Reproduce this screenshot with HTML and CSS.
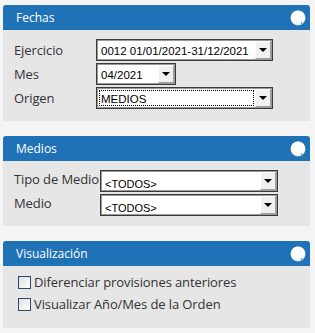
FILE: index.html
```html
<!DOCTYPE html>
<html lang="es">
<head>
  <meta charset="UTF-8" />
  <meta name="viewport" content="width=device-width, initial-scale=1.0" />
  <title>Filtros</title>
  <link rel="stylesheet" href="styles.css">
</head>
<body>
  <div class="panel">
    <div class="panel-head">
      <span>Fechas</span>
      <svg class="knob" width="16" height="16" viewBox="0 0 16 16">
        <circle cx="8" cy="8" r="7.5" fill="#c9d6e3"/>
        <circle cx="8" cy="7.6" r="7.1" fill="#fff"/>
        <circle cx="11.5" cy="13" r="0.8" fill="#1f72b6"/>
      </svg>
    </div>
    <div class="panel-body form fechas">
      <label>Ejercicio</label>
      <div class="combo wide">
        <div class="combo-text">0012 01/01/2021-31/12/2021</div>
        <div class="combo-btn"></div>
      </div>
      <label>Mes</label>
      <div class="combo short">
        <div class="combo-text">04/2021</div>
        <div class="combo-btn"></div>
      </div>
      <label>Origen</label>
      <div class="combo wide">
        <div class="combo-text focused">MEDIOS</div>
        <div class="combo-btn"></div>
      </div>
    </div>
  </div>

  <div class="panel">
    <div class="panel-head">
      <span>Medios</span>
      <svg class="knob" width="16" height="16" viewBox="0 0 16 16">
        <circle cx="8" cy="8" r="7.5" fill="#c9d6e3"/>
        <circle cx="8" cy="7.6" r="7.1" fill="#fff"/>
        <circle cx="11.5" cy="13" r="0.8" fill="#1f72b6"/>
      </svg>
    </div>
    <div class="panel-body form medios">
      <label>Tipo de Medio</label>
      <div class="combo wide">
        <div class="combo-text small">&lt;TODOS&gt;</div>
        <div class="combo-btn"></div>
      </div>
      <label>Medio</label>
      <div class="combo wide">
        <div class="combo-text small">&lt;TODOS&gt;</div>
        <div class="combo-btn"></div>
      </div>
    </div>
  </div>

  <div class="panel">
    <div class="panel-head">
      <span>Visualización</span>
      <svg class="knob" width="16" height="16" viewBox="0 0 16 16">
        <circle cx="8" cy="8" r="7.5" fill="#c9d6e3"/>
        <circle cx="8" cy="7.6" r="7.1" fill="#fff"/>
        <circle cx="11.5" cy="13" r="0.8" fill="#1f72b6"/>
      </svg>
    </div>
    <div class="panel-body checks">
      <label class="check"><span class="box"></span>Diferenciar provisiones anteriores</label>
      <label class="check"><span class="box"></span>Visualizar Año/Mes de la Orden</label>
    </div>
  </div>
</body>
</html>
```

FILE: styles.css
```css
* {
  box-sizing: border-box;
  margin: 0;
  padding: 0;
}
body {
  background-color: #f4f4f4;
  font-family: "Open Sans", sans-serif;
  color: #333;
  padding: 5px 5px 0 3px;
  display: flex;
  flex-direction: column;
  gap: 15px;
}
.panel {
  width: 307px;
}
.panel-head {
  display: flex;
  justify-content: space-between;
  align-items: center;
  height: 25px;
  padding: 0 4px 0 13px;
  background-color: #1f72b6;
  border-radius: 3px 3px 0 0;
  color: #fff;
  font-size: 12px;
}
.panel-body {
  background-color: #e6e6e6;
}
.form {
  display: grid;
  row-gap: 2px;
  align-items: center;
  align-content: start;
  padding: 9px 0 0 11px;
}
.fechas {
  grid-template-columns: 82px auto;
  height: 91px;
}
.medios {
  grid-template-columns: auto auto;
  column-gap: 1px;
  justify-content: start;
  height: 65px;
}
.form label {
  font-size: 13px;
  letter-spacing: -0.1px;
  line-height: 18px;
  white-space: nowrap;
}
.medios label {
  align-self: start;
}
.combo {
  display: flex;
  height: 22px;
  background-color: #fff;
  border: 1px solid #3a3a3a;
  box-shadow: inset 0 0 0 1px #9a9a9a;
  justify-self: start;
}
.wide {
  width: 177px;
}
.medios .wide {
  width: 178px;
}
.short {
  width: 80px;
}
.combo-text {
  flex: 1;
  margin: 2px 1px 2px 2px;
  padding-left: 1px;
  font-family: "Liberation Sans", Arial, sans-serif;
  font-size: 11.5px;
  line-height: 16px;
  color: #000;
  border: 1px solid transparent;
  white-space: nowrap;
  overflow: hidden;
}
.combo-text.small {
  font-size: 11px;
  padding-top: 2px;
}
.focused {
  border: 1px dotted #000;
}
.combo-btn {
  width: 16px;
  margin: 1px 1px 1px 0;
  background-color: #f0f0f0;
  border-left: 1px solid #fff;
  border-top: 1px solid #fff;
  border-right: 1px solid #a0a0a0;
  border-bottom: 1px solid #a0a0a0;
  display: flex;
  justify-content: center;
  align-items: center;
}
.combo-btn::after {
  content: "";
  border-left: 4px solid transparent;
  border-right: 4px solid transparent;
  border-top: 4px solid #000;
}
.checks {
  display: flex;
  flex-direction: column;
  gap: 5px;
  height: 62px;
  padding: 8px 0 0 15px;
}
.check {
  display: flex;
  align-items: center;
  gap: 3px;
  font-size: 13px;
  letter-spacing: -0.1px;
  line-height: 17px;
}
.box {
  width: 13px;
  height: 13px;
  border: 1px solid #2a4a6a;
  background: linear-gradient(135deg, #e0e0e0, #fff);
}
```
